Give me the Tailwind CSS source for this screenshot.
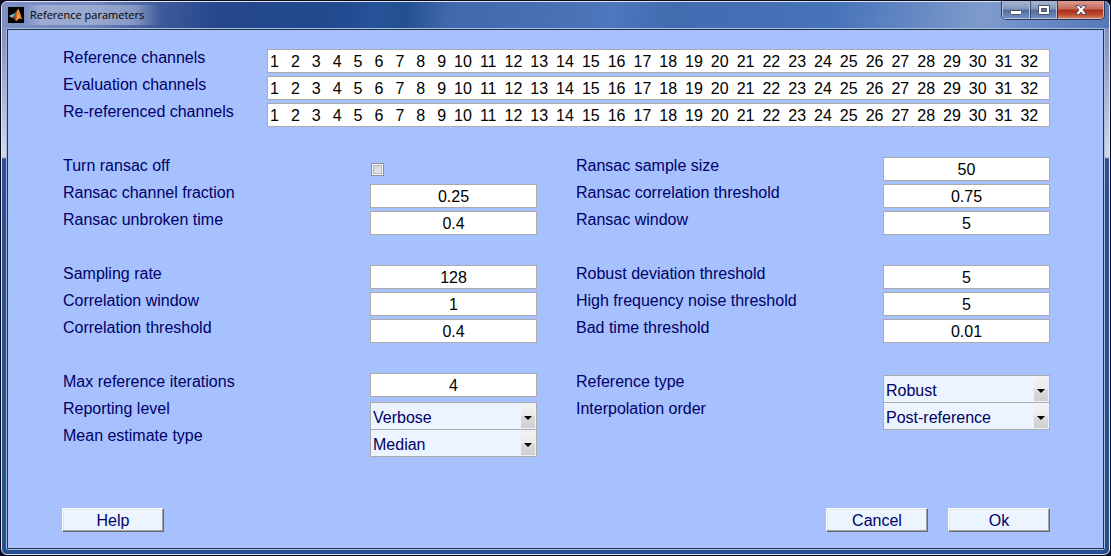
<!DOCTYPE html>
<html lang="en">
<head>
<meta charset="utf-8">
<title>Reference parameters</title>
<script src="https://cdn.jsdelivr.net/npm/@tailwindcss/browser@4"></script>
</head>
<body class="flex min-h-screen bg-[#0a0c1e] p-px font-['Liberation_Sans',Arial,sans-serif] text-base leading-4 text-[#000066]">
<div class="flex flex-1 flex-col rounded-md border border-[#dfe5f0] bg-[linear-gradient(180deg,#7488c0_0px,#8796c6_40px,#d3d9e8_155px,#2d5096_157px,#24508f_100%)]">
  <header class="relative flex h-[26px] items-center rounded-t-[5px] bg-[linear-gradient(100deg,#7f91c3_0px,#7086bd_90px,#3f5c9c_155px,#26478c_215px,#214a8f_330px,#27539a_370px,#23508f_400px,#4068ac_440px,#4b73b8_580px,#4e79be_600px,#426cb0_660px,#4773b9_820px,#7f9bcc_970px,#6e8fca_1010px,#5477b8_100%)] pl-1.5">
    <svg class="h-4 w-4 shrink-0" viewBox="0 0 16 16" aria-hidden="true">
      <defs><linearGradient id="peak" x1="0" x2="1" y1="0" y2="0"><stop offset="0" stop-color="#6b1c10"/><stop offset=".5" stop-color="#e8772a"/><stop offset=".7" stop-color="#f6a040"/><stop offset="1" stop-color="#b5331a"/></linearGradient></defs>
      <rect width="16" height="16" fill="#000"/>
      <path d="M1 9 5 7Q7 6 8 4.500L9 3 7 8.500 4.500 11Z" fill="#3f93a8"/>
      <path d="M1 9 5 7 6.500 8 4.500 11Z" fill="#6bb8c8"/>
      <path d="M4.500 11 7 8Q9 3 10 1.500 11 2 12 6T15 13Q13 11 11.500 11.500T8 14.500Q7 11.500 4.500 11Z" fill="url(#peak)"/>
      <path d="M10 2Q9.800 8 8 14L11 11Z" fill="#f9a03c"/>
    </svg>
    <h1 class="bg-[linear-gradient(90deg,#ffffff00,#ffffff44_12%,#ffffff50_80%,#ffffff00)] pr-4 pl-1.5 font-['Open_Sans',sans-serif] text-[11px] leading-5 text-black">Reference parameters</h1>
    <div class="absolute -top-px right-1 flex h-[19px] overflow-hidden rounded-b-[5px] border border-t-0 border-[#2c3a5c]">
      <button type="button" aria-label="Minimize" class="flex w-[28px] items-center justify-center border border-t-0 border-[#b3c1dd] bg-[linear-gradient(#a9b6d2_0%,#8696bb_48%,#536a9b_52%,#7090c4_100%)]">
        <svg class="mt-0.5 h-3 w-4" viewBox="0 0 16 12"><rect x="2.500" y="5.500" width="11" height="4" rx="1" fill="#fff" stroke="#4c526a"/></svg>
      </button>
      <button type="button" aria-label="Maximize" class="flex w-[27px] items-center justify-center border border-t-0 border-l-[#3a4a70] border-[#b3c1dd] bg-[linear-gradient(#a9b6d2_0%,#8696bb_48%,#536a9b_52%,#7090c4_100%)]">
        <svg class="h-3 w-4" viewBox="0 0 16 12"><path fill-rule="evenodd" d="M2.500 1.500h11v9h-11zM5.500 4.500h5v3h-5z" fill="#fff" stroke="#4c526a"/></svg>
      </button>
      <button type="button" aria-label="Close" class="flex w-[47px] items-center justify-center border border-t-0 border-l-[#4a2a38] border-[#dcb3ad] bg-[linear-gradient(#dc9d92_0%,#c66a5b_48%,#a92c19_52%,#bd4a2e_80%,#d17b5e_100%)]">
        <svg class="h-3 w-4" viewBox="0 0 16 12"><path d="M2.500 1.500H6L8 4l2-2.500h3.500L10 6l3.500 4.500H10L8 8l-2 2.500H2.500L6 6Z" fill="#fff" stroke="#555266" stroke-linejoin="round"/></svg>
      </button>
    </div>
  </header>
  <main class="mx-1 mb-1 flex flex-1 rounded-xs border border-[#a9bbdb]">
    <form class="flex flex-1 flex-col border border-[#203250] bg-[#a7c1ff] pt-[19px] pr-[53px] pb-4 pl-[54px]">
      <div class="grid auto-rows-[27px] grid-cols-[205fr_783fr] items-start">
        <label for="rc" class="pt-px pl-px">Reference channels</label>
        <input id="rc" class="h-6 w-full min-w-0 border border-[#ababab] bg-white px-0.5 pt-0.5 text-black" value="1&#8197;&#8197;&#8197;2&#8197;&#8197;&#8197;3&#8197;&#8197;&#8197;4&#8197;&#8197;&#8197;5&#8197;&#8197;&#8197;6&#8197;&#8197;&#8197;7&#8197;&#8197;&#8197;8&#8197;&#8197;&#8197;9&#8197;&#8197;10&#8197;&#8197;11&#8197;&#8197;12&#8197;&#8197;13&#8197;&#8197;14&#8197;&#8197;15&#8197;&#8197;16&#8197;&#8197;17&#8197;&#8197;18&#8197;&#8197;19&#8197;&#8197;20&#8197;&#8197;21&#8197;&#8197;22&#8197;&#8197;23&#8197;&#8197;24&#8197;&#8197;25&#8197;&#8197;26&#8197;&#8197;27&#8197;&#8197;28&#8197;&#8197;29&#8197;&#8197;30&#8197;&#8197;31&#8197;&#8197;32">
        <label for="ec" class="pt-px pl-px">Evaluation channels</label>
        <input id="ec" class="h-6 w-full min-w-0 border border-[#ababab] bg-white px-0.5 pt-0.5 text-black" value="1&#8197;&#8197;&#8197;2&#8197;&#8197;&#8197;3&#8197;&#8197;&#8197;4&#8197;&#8197;&#8197;5&#8197;&#8197;&#8197;6&#8197;&#8197;&#8197;7&#8197;&#8197;&#8197;8&#8197;&#8197;&#8197;9&#8197;&#8197;10&#8197;&#8197;11&#8197;&#8197;12&#8197;&#8197;13&#8197;&#8197;14&#8197;&#8197;15&#8197;&#8197;16&#8197;&#8197;17&#8197;&#8197;18&#8197;&#8197;19&#8197;&#8197;20&#8197;&#8197;21&#8197;&#8197;22&#8197;&#8197;23&#8197;&#8197;24&#8197;&#8197;25&#8197;&#8197;26&#8197;&#8197;27&#8197;&#8197;28&#8197;&#8197;29&#8197;&#8197;30&#8197;&#8197;31&#8197;&#8197;32">
        <label for="rr" class="pt-px pl-px">Re-referenced channels</label>
        <input id="rr" class="h-6 w-full min-w-0 border border-[#ababab] bg-white px-0.5 pt-0.5 text-black" value="1&#8197;&#8197;&#8197;2&#8197;&#8197;&#8197;3&#8197;&#8197;&#8197;4&#8197;&#8197;&#8197;5&#8197;&#8197;&#8197;6&#8197;&#8197;&#8197;7&#8197;&#8197;&#8197;8&#8197;&#8197;&#8197;9&#8197;&#8197;10&#8197;&#8197;11&#8197;&#8197;12&#8197;&#8197;13&#8197;&#8197;14&#8197;&#8197;15&#8197;&#8197;16&#8197;&#8197;17&#8197;&#8197;18&#8197;&#8197;19&#8197;&#8197;20&#8197;&#8197;21&#8197;&#8197;22&#8197;&#8197;23&#8197;&#8197;24&#8197;&#8197;25&#8197;&#8197;26&#8197;&#8197;27&#8197;&#8197;28&#8197;&#8197;29&#8197;&#8197;30&#8197;&#8197;31&#8197;&#8197;32">
      </div>
      <div class="mt-[27px] grid grid-cols-2 gap-x-[38px] gap-y-[27px]">
        <div class="grid auto-rows-[27px] grid-cols-[308fr_167fr] items-start">
          <label for="off" class="pt-px pl-px">Turn ransac off</label>
          <input id="off" type="checkbox" class="mt-1.5 ml-px h-[13px] w-[13px] appearance-none border border-[#8e8f8f] bg-[linear-gradient(135deg,#c4c9cf,#f3f3f3)] shadow-[inset_0_0_0_1px_#f4f4f4,inset_0_0_0_2px_#b5bac0] checked:bg-[#3a5fa8]">
          <label for="frac" class="pt-px pl-px">Ransac channel fraction</label>
          <input id="frac" class="h-6 w-full min-w-0 border border-[#ababab] bg-white pt-0.5 text-center text-black" value="0.25">
          <label for="unb" class="pt-px pl-px">Ransac unbroken time</label>
          <input id="unb" class="h-6 w-full min-w-0 border border-[#ababab] bg-white pt-0.5 text-center text-black" value="0.4">
        </div>
        <div class="grid auto-rows-[27px] grid-cols-[308fr_167fr] items-start">
          <label for="size" class="pt-px pl-px">Ransac sample size</label>
          <input id="size" class="h-6 w-full min-w-0 border border-[#ababab] bg-white pt-0.5 text-center text-black" value="50">
          <label for="rct" class="pt-px pl-px">Ransac correlation threshold</label>
          <input id="rct" class="h-6 w-full min-w-0 border border-[#ababab] bg-white pt-0.5 text-center text-black" value="0.75">
          <label for="rwin" class="pt-px pl-px">Ransac window</label>
          <input id="rwin" class="h-6 w-full min-w-0 border border-[#ababab] bg-white pt-0.5 text-center text-black" value="5">
        </div>
        <div class="grid auto-rows-[27px] grid-cols-[308fr_167fr] items-start">
          <label for="rate" class="pt-px pl-px">Sampling rate</label>
          <input id="rate" class="h-6 w-full min-w-0 border border-[#ababab] bg-white pt-0.5 text-center text-black" value="128">
          <label for="cwin" class="pt-px pl-px">Correlation window</label>
          <input id="cwin" class="h-6 w-full min-w-0 border border-[#ababab] bg-white pt-0.5 text-center text-black" value="1">
          <label for="cth" class="pt-px pl-px">Correlation threshold</label>
          <input id="cth" class="h-6 w-full min-w-0 border border-[#ababab] bg-white pt-0.5 text-center text-black" value="0.4">
        </div>
        <div class="grid auto-rows-[27px] grid-cols-[308fr_167fr] items-start">
          <label for="rdt" class="pt-px pl-px">Robust deviation threshold</label>
          <input id="rdt" class="h-6 w-full min-w-0 border border-[#ababab] bg-white pt-0.5 text-center text-black" value="5">
          <label for="hft" class="pt-px pl-px">High frequency noise threshold</label>
          <input id="hft" class="h-6 w-full min-w-0 border border-[#ababab] bg-white pt-0.5 text-center text-black" value="5">
          <label for="btt" class="pt-px pl-px">Bad time threshold</label>
          <input id="btt" class="h-6 w-full min-w-0 border border-[#ababab] bg-white pt-0.5 text-center text-black" value="0.01">
        </div>
        <div class="grid auto-rows-[27px] grid-cols-[308fr_167fr] items-start">
          <label for="iter" class="pt-px pl-px">Max reference iterations</label>
          <input id="iter" class="h-6 w-full min-w-0 border border-[#ababab] bg-white pt-0.5 text-center text-black" value="4">
          <label for="rep" class="pt-px pl-px">Reporting level</label>
          <div class="relative mt-0.5 h-7">
            <select id="rep" class="h-full w-full appearance-none border border-[#ababab] bg-[#ebf4ff] pt-1 pl-0.5"><option>Verbose</option></select>
            <span class="pointer-events-none absolute top-0.5 right-0.5 bottom-0.5 flex w-3.5 items-center justify-center bg-[linear-gradient(#f2f2f2,#ebebeb_50%,#dcdcdc_52%,#cfcfcf)] pt-1"><svg class="h-1 w-2" viewBox="0 0 8 4"><path d="M0 0h8L4 4Z" fill="#000"/></svg></span>
          </div>
          <label for="mean" class="pt-px pl-px">Mean estimate type</label>
          <div class="relative mt-0.5 h-7">
            <select id="mean" class="h-full w-full appearance-none border border-[#ababab] bg-[#ebf4ff] pt-1 pl-0.5"><option>Median</option></select>
            <span class="pointer-events-none absolute top-0.5 right-0.5 bottom-0.5 flex w-3.5 items-center justify-center bg-[linear-gradient(#f2f2f2,#ebebeb_50%,#dcdcdc_52%,#cfcfcf)] pt-1"><svg class="h-1 w-2" viewBox="0 0 8 4"><path d="M0 0h8L4 4Z" fill="#000"/></svg></span>
          </div>
        </div>
        <div class="grid auto-rows-[27px] grid-cols-[308fr_167fr] items-start">
          <label for="type" class="pt-px pl-px">Reference type</label>
          <div class="relative mt-0.5 h-7">
            <select id="type" class="h-full w-full appearance-none border border-[#ababab] bg-[#ebf4ff] pt-1 pl-0.5"><option>Robust</option></select>
            <span class="pointer-events-none absolute top-0.5 right-0.5 bottom-0.5 flex w-3.5 items-center justify-center bg-[linear-gradient(#f2f2f2,#ebebeb_50%,#dcdcdc_52%,#cfcfcf)] pt-1"><svg class="h-1 w-2" viewBox="0 0 8 4"><path d="M0 0h8L4 4Z" fill="#000"/></svg></span>
          </div>
          <label for="ord" class="pt-px pl-px">Interpolation order</label>
          <div class="relative mt-0.5 h-7">
            <select id="ord" class="h-full w-full appearance-none border border-[#ababab] bg-[#ebf4ff] pt-1 pl-0.5"><option>Post-reference</option></select>
            <span class="pointer-events-none absolute top-0.5 right-0.5 bottom-0.5 flex w-3.5 items-center justify-center bg-[linear-gradient(#f2f2f2,#ebebeb_50%,#dcdcdc_52%,#cfcfcf)] pt-1"><svg class="h-1 w-2" viewBox="0 0 8 4"><path d="M0 0h8L4 4Z" fill="#000"/></svg></span>
          </div>
        </div>
      </div>
      <div class="mt-auto flex gap-5 pt-4">
        <button type="button" class="mr-auto h-6 w-[102px] border border-t-white border-r-[#6a6a6a] border-b-[#6a6a6a] border-l-white bg-[#ebf4ff] pt-0.5 shadow-[inset_-1px_-1px_#a0a0a0,inset_1px_1px_#e3e3e3]">Help</button>
        <button type="button" class="h-6 w-[102px] border border-t-white border-r-[#6a6a6a] border-b-[#6a6a6a] border-l-white bg-[#ebf4ff] pt-0.5 shadow-[inset_-1px_-1px_#a0a0a0,inset_1px_1px_#e3e3e3]">Cancel</button>
        <button type="submit" class="h-6 w-[102px] border border-t-white border-r-[#6a6a6a] border-b-[#6a6a6a] border-l-white bg-[#ebf4ff] pt-0.5 shadow-[inset_-1px_-1px_#a0a0a0,inset_1px_1px_#e3e3e3]">Ok</button>
      </div>
    </form>
  </main>
</div>
</body>
</html>
